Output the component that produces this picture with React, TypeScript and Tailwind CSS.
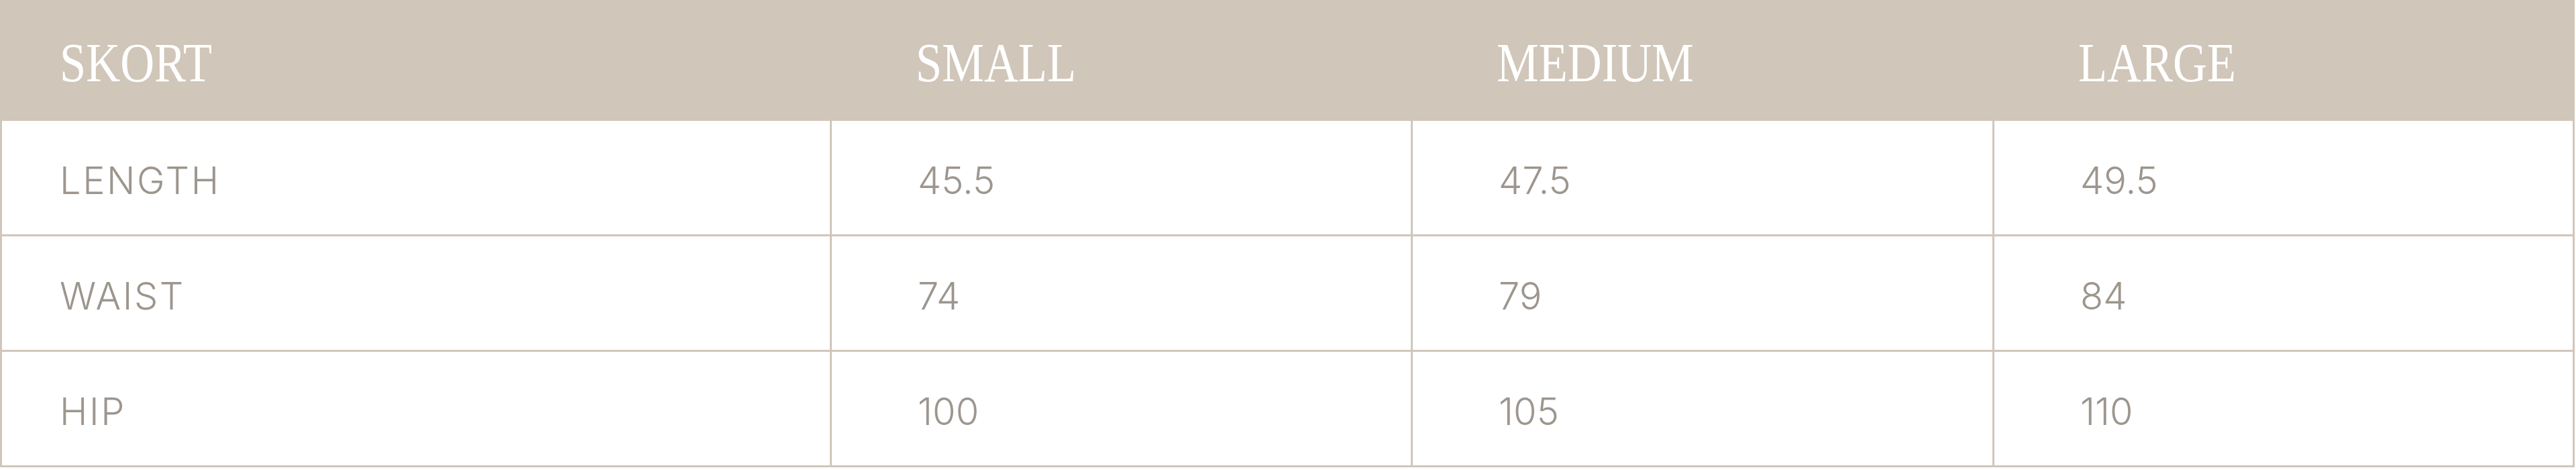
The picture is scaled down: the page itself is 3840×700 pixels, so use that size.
const HEADERS = ["SKORT", "SMALL", "MEDIUM", "LARGE"];

const ROWS = [
  { label: "LENGTH", values: ["45.5", "47.5", "49.5"] },
  { label: "WAIST", values: ["74", "79", "84"] },
  { label: "HIP", values: ["100", "105", "110"] },
];

export default function App() {
  return (
    <div className="w-[3838px] bg-[#d0c6b9] px-[3px] pb-[3px]">
      {/* Header */}
      <div className="grid h-[180px] grid-cols-[1234px_863px_864px_1fr] items-center gap-x-[3px] pt-[8px]">
        {HEADERS.map((h, i) => (
          <div key={h} className={i === 0 ? "pl-[86px]" : "pl-[125px]"}>
            <span
              className="inline-block origin-left scale-x-[0.86] text-[82px] leading-none text-white"
              style={{ fontFamily: '"Liberation Serif", "Times New Roman", serif' }}
            >
              {h}
            </span>
          </div>
        ))}
      </div>

      {/* Body */}
      <div className="grid grid-cols-[1234px_863px_864px_1fr] gap-[3px]">
        {ROWS.map((r) => (
          <>
            <div
              key={r.label}
              className="flex h-[169px] items-center bg-white pl-[86px] pt-[8px] text-[56px] font-light leading-none tracking-[0.045em] text-[#9d968e]"
              style={{ fontFamily: "Inter, sans-serif" }}
            >
              {r.label}
            </div>
            {r.values.map((v, j) => (
              <div
                key={r.label + j}
                className="flex h-[169px] items-center bg-white pl-[128px] pt-[8px] text-[56px] font-light leading-none text-[#9d968e]"
                style={{ fontFamily: "Inter, sans-serif" }}
              >
                {v}
              </div>
            ))}
          </>
        ))}
      </div>
    </div>
  );
}
